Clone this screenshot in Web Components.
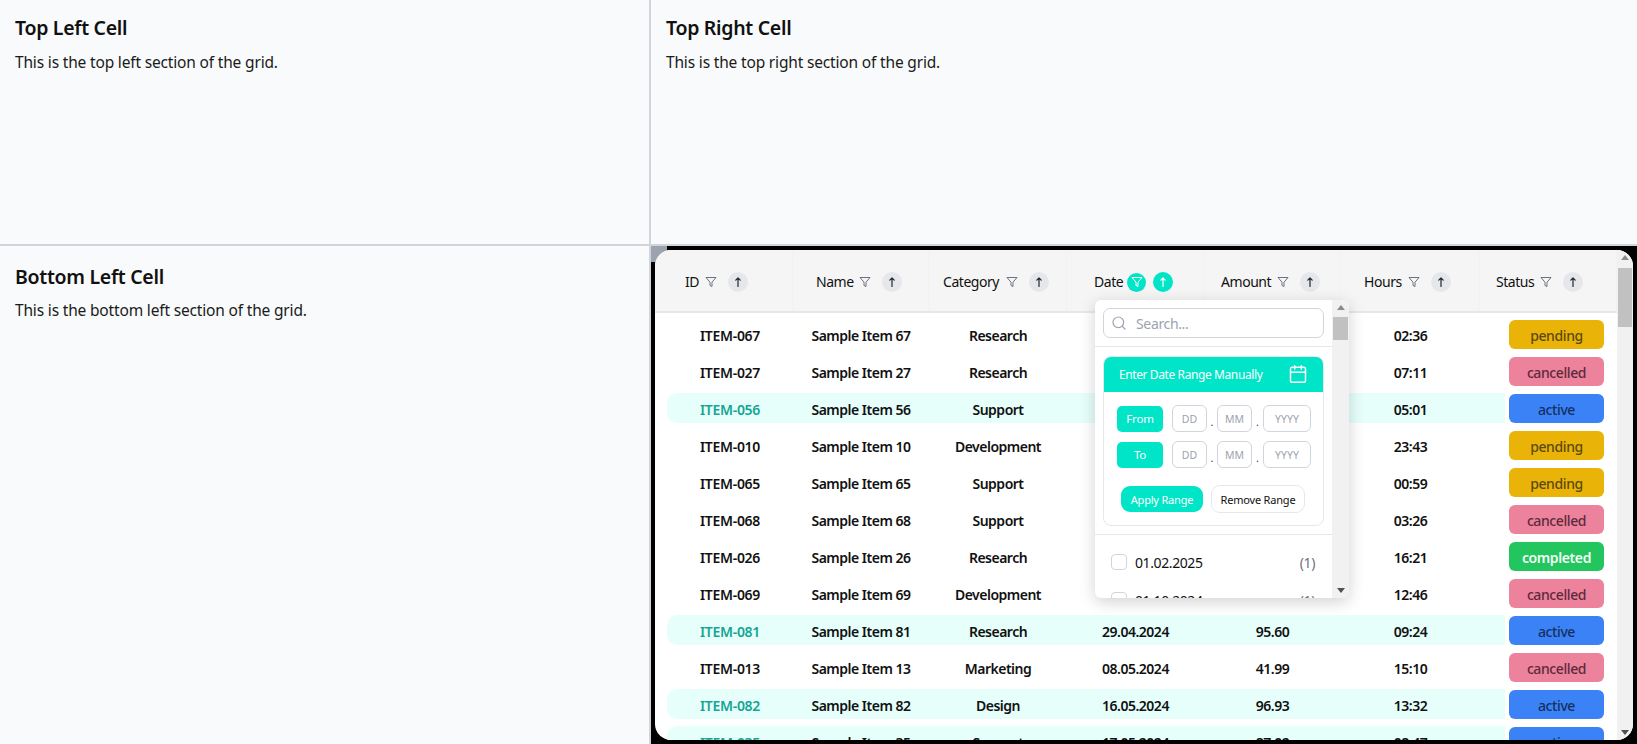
<!DOCTYPE html>
<html lang="en"><head><meta charset="utf-8"><title>Grid</title>
<style>
html,body{margin:0;height:744px;overflow:hidden;background:#f9fafb;font-family:"Noto Sans","Open Sans",sans-serif;color:#111}
</style></head><body>
<app-grid>
  <info-cell slot="tl" heading="Top Left Cell" text="This is the top left section of the grid."></info-cell>
  <info-cell slot="tr" heading="Top Right Cell" text="This is the top right section of the grid."></info-cell>
  <info-cell slot="bl" lower heading="Bottom Left Cell" text="This is the bottom left section of the grid."></info-cell>
  <table-frame slot="br"></table-frame>
</app-grid>
<script>
const svg=(w,h,vb,body,extra='')=>`<svg width="${w}" height="${h}" viewBox="${vb}" fill="none" ${extra}>${body}</svg>`;
const FILTER=c=>svg(12,12,'0 0 24 24',`<polygon points="22 3 2 3 10 12.46 10 19 14 21 14 12.46 22 3" stroke="${c}" stroke-width="2" stroke-linejoin="round"/>`);
const ARROW=c=>svg(12,12,'0 0 12 12',`<path d="M6 10.5V2M3.8 4.2L6 2l2.2 2.2" stroke="${c}" stroke-width="1.2" stroke-linecap="round" stroke-linejoin="round"/>`);

class AppGrid extends HTMLElement{constructor(){super();this.attachShadow({mode:'open'}).innerHTML=`<style>
:host{display:grid;grid-template-columns:649px 986px;grid-template-rows:244px 498px;gap:2px;background:#d1d5db;width:1637px;height:744px}
::slotted(*){min-width:0;min-height:0}
</style><slot name="tl"></slot><slot name="tr"></slot><slot name="bl"></slot><slot name="br"></slot>`}}
customElements.define('app-grid',AppGrid);

class InfoCell extends HTMLElement{connectedCallback(){if(this.shadowRoot)return;this.attachShadow({mode:'open'}).innerHTML=`<style>
:host{display:block;background:#f9fafb;padding:14px 15px;box-sizing:border-box}
:host([lower]){padding-top:17px}
:host([lower]) p{margin-top:9px}
h2{margin:0;font:600 19.5px/28px "Noto Sans",sans-serif;letter-spacing:-.3px;color:#111}
p{margin:10px 0 0;font:400 15.5px/20px "Noto Sans",sans-serif;letter-spacing:-.17px;color:#1a1a1a}
</style><h2>${this.getAttribute('heading')}</h2><p>${this.getAttribute('text')}</p>`}}
customElements.define('info-cell',InfoCell);

class FakeScrollbar extends HTMLElement{connectedCallback(){if(this.shadowRoot)return;const th=this.getAttribute('thumb-top'),h=this.getAttribute('thumb-height');
this.attachShadow({mode:'open'}).innerHTML=`<style>
:host{display:flex;flex-direction:column;width:var(--w,16px);flex:none;background:#f1f1f1;position:relative}
.up,.down{position:absolute;left:50%;margin-left:-4px;width:0;height:0;border:4px solid transparent}
.up{top:5px;border-top:0;border-bottom:5px solid #8a8a8a}
.down{bottom:5px;border-bottom:0;border-top:5px solid #505050}
.t{position:absolute;left:1px;right:1px;top:${th}px;height:${h}px;background:#c1c1c1}
</style><span class="up"></span><span class="t"></span><span class="down"></span>`}}
customElements.define('fake-scrollbar',FakeScrollbar);

class HeaderCell extends HTMLElement{connectedCallback(){if(this.shadowRoot)return;const on=this.hasAttribute('active');
this.attachShadow({mode:'open'}).innerHTML=`<style>
:host{display:flex;align-items:center;box-sizing:border-box;border-right:1px solid #f2f2f2;padding:3px 0 0 var(--pl);height:100%}
.l{width:var(--lw);white-space:nowrap;font-size:14px;letter-spacing:-.45px;color:#111;flex:none;line-height:20px}
.f{width:20px;height:20px;border-radius:50%;display:flex;align-items:center;justify-content:center;flex:none}
.s{width:20px;height:20px;border-radius:50%;display:flex;align-items:center;justify-content:center;margin-left:7px;background:#e5e7eb;flex:none}
:host([active]) .f{width:19px;height:19px;background:#00e5c8}
:host([active]) .s{background:#00e5c8}
</style><span class="l">${this.getAttribute('label')}</span><span class="f">${FILTER(on?'#fff':'#6b7280')}</span><span class="s">${ARROW(on?'#fff':'#1f2937')}</span>`}}
customElements.define('header-cell',HeaderCell);

class StatusBadge extends HTMLElement{connectedCallback(){if(this.shadowRoot)return;
this.attachShadow({mode:'open'}).innerHTML=`<style>
:host{display:flex;align-items:center;justify-content:center;box-sizing:border-box;padding-top:2px;width:95px;height:29px;border-radius:6px;font-size:14px;font-weight:500;letter-spacing:-.4px;flex:none}
:host([kind=pending]){background:#eab308;color:#5c4a10}
:host([kind=cancelled]){background:#ec829b;color:#5c2a3c}
:host([kind=active]){background:#3b82f6;color:#14305f}
:host([kind=completed]){background:#22c55e;color:#f0fdf4;font-weight:600}
</style><slot></slot>`}}
customElements.define('status-badge',StatusBadge);

class DataRow extends HTMLElement{connectedCallback(){if(this.shadowRoot)return;const d=this.dataset;const hi=d.status==='active';
this.attachShadow({mode:'open'}).innerHTML=`<style>
:host{display:flex;height:30px;align-items:center;margin-left:12px;font-size:14px;font-weight:600;letter-spacing:-.5px;color:#111;flex:none}
.c{display:grid;grid-template-columns:126px 136px 138px 137px 137px 139px 25px;align-items:center;height:30px;box-sizing:border-box;padding-top:2px;border-radius:10px 0 0 10px;width:838px;flex:none}
:host([hi]) .c{background:#e6fffb}
:host([hi]) .id{color:#14a594}
span{text-align:center;white-space:nowrap}
.id{letter-spacing:-.3px}
status-badge{margin-left:4px;margin-top:1px}
</style><div class="c"><span class="id">${d.id}</span><span>${d.name}</span><span>${d.cat}</span><span>${d.date||''}</span><span>${d.amount||''}</span><span>${d.hours}</span><i></i></div><status-badge kind="${d.status}">${d.status}</status-badge>`;
if(hi)this.setAttribute('hi','')}}
customElements.define('data-row',DataRow);

class DateFilter extends HTMLElement{connectedCallback(){if(this.shadowRoot)return;
const dmy=()=>`<span class="in" style="width:35px">DD</span><b>.</b><span class="in" style="width:35px">MM</span><b style="width:11px">.</b><span class="in" style="width:48px">YYYY</span>`;
this.attachShadow({mode:'open'}).innerHTML=`<style>
:host{position:absolute;left:440px;top:50px;width:254px;height:298px;display:flex;background:#fff;border-radius:6px;overflow:hidden;font-size:14px}
.wrap{flex:1;min-width:0;display:flex;flex-direction:column}
.top{height:47px;box-sizing:border-box;border-bottom:1px solid #e5e7eb;padding:8px 8px 0;flex:none}
.search{height:30px;box-sizing:border-box;border:1px solid #d1d5db;border-radius:7px;display:flex;align-items:center;padding-left:7px;gap:9px;color:#9ca3af;letter-spacing:-.35px}
.mid{height:188px;box-sizing:border-box;border-bottom:1px solid #e5e7eb;padding:9px 8px 0 8px;flex:none}
.card{height:170px;box-sizing:border-box;border:1px solid #e5e7eb;border-radius:8px;overflow:hidden}
.hd{height:36px;background:#00e5c8;color:#fff;display:flex;align-items:center;justify-content:space-between;padding:0 16px 0 16px;font-size:12px;letter-spacing:-.4px;margin:-1px -1px 0}
.rw{display:flex;align-items:center;margin:13px 0 0 13px}
.rw+.rw{margin-top:9px}
.tag{width:46px;height:26px;background:#00e5c8;color:#fff;border-radius:5px;font-size:11.5px;display:flex;align-items:center;justify-content:center;margin-right:9px;letter-spacing:-.2px}
.in{height:27px;box-sizing:border-box;border:1px solid #d1d5db;border-radius:6px;color:#9ca3af;font-size:10.5px;display:flex;align-items:center;justify-content:center}
b{font-weight:400;width:10px;text-align:center;font-size:11px;color:#444;align-self:flex-end;line-height:20px}
.acts{display:flex;align-items:center;gap:8px;margin:17px 0 0 17px}
.ap,.rm{display:flex;align-items:center;justify-content:center;font-size:11px;letter-spacing:-.2px;border-radius:9px;box-sizing:border-box}
.ap{width:82px;height:26px;background:#00e5c8;color:#fff}
.rm{width:94px;height:28px;border:1px solid #e5e7eb;color:#111}
.li{height:22px;display:flex;align-items:center;padding:0 17px 0 16px;flex:none;letter-spacing:-.4px}
.li+.li{margin-top:16px}
.list{padding-top:16px}
.cb{width:16px;height:16px;box-sizing:border-box;border:1px solid #d1d5db;border-radius:4px;margin-right:8px;flex:none}
.n{margin-left:auto;color:#6b7280}
fake-scrollbar{--w:17px}
</style><div class="wrap">
<div class="top"><div class="search">${svg(16,16,'0 0 24 24','<circle cx="11" cy="11" r="8" stroke="#9ca3af" stroke-width="1.8"/><path d="M21 21l-4.3-4.3" stroke="#9ca3af" stroke-width="1.8" stroke-linecap="round"/>')}<span>Search...</span></div></div>
<div class="mid"><div class="card">
<div class="hd"><span>Enter Date Range Manually</span>${svg(20,20,'0 0 24 24','<rect x="3" y="4" width="18" height="18" rx="2" stroke="#fff" stroke-width="1.8"/><path d="M16 2v4M8 2v4M3 10h18" stroke="#fff" stroke-width="1.8" stroke-linecap="round"/>')}</div>
<div class="rw"><span class="tag">From</span>${dmy()}</div>
<div class="rw"><span class="tag">To</span>${dmy()}</div>
<div class="acts"><span class="ap">Apply Range</span><span class="rm">Remove Range</span></div>
</div></div>
<div class="list"><div class="li"><span class="cb"></span><span>01.02.2025</span><span class="n">(1)</span></div>
<div class="li"><span class="cb"></span><span>01.10.2024</span><span class="n">(1)</span></div></div>
</div><fake-scrollbar thumb-top="17" thumb-height="23"></fake-scrollbar>`;
}}
customElements.define('date-filter',DateFilter);

const ROWS=[
['ITEM-067','Sample Item 67','Research','','','02:36','pending'],
['ITEM-027','Sample Item 27','Research','','','07:11','cancelled'],
['ITEM-056','Sample Item 56','Support','','','05:01','active'],
['ITEM-010','Sample Item 10','Development','','','23:43','pending'],
['ITEM-065','Sample Item 65','Support','','','00:59','pending'],
['ITEM-068','Sample Item 68','Support','','','03:26','cancelled'],
['ITEM-026','Sample Item 26','Research','','','16:21','completed'],
['ITEM-069','Sample Item 69','Development','','','12:46','cancelled'],
['ITEM-081','Sample Item 81','Research','29.04.2024','95.60','09:24','active'],
['ITEM-013','Sample Item 13','Marketing','08.05.2024','41.99','15:10','cancelled'],
['ITEM-082','Sample Item 82','Design','16.05.2024','96.93','13:32','active'],
['ITEM-035','Sample Item 35','Support','17.05.2024','87.02','08:47','active']];
const HEAD=[['ID',138,30,16],['Name',136,23,39],['Category',138,14,59],['Date',137,27,33],['Amount',137,17,52],['Hours',139,23,40],['Status',137,16,40]];

class TableFrame extends HTMLElement{connectedCallback(){if(this.shadowRoot)return;
const head=HEAD.map(([l,w,p,lw])=>`<header-cell label="${l}" ${l==='Date'?'active':''} style="--pl:${p}px;--lw:${lw}px"></header-cell>`).join('');
const rows=ROWS.map(r=>{const e=document.createElement('data-row');const d=e.dataset;[d.id,d.name,d.cat,d.date,d.amount,d.hours,d.status]=r;return e.outerHTML}).join('');
this.attachShadow({mode:'open'}).innerHTML=`<style>
:host{display:flex;background:#000;padding:4px;box-sizing:border-box;position:relative}
.corner{position:absolute;left:0;top:0;width:16px;height:16px;background:#9ca3af}
.panel{position:relative;flex:1;min-width:0;display:flex;background:#fff;border-radius:16px;overflow:hidden}
.main{flex:1;min-width:0;display:flex;flex-direction:column;overflow:hidden}
.head{height:63px;box-sizing:border-box;flex:none;background:#f5f5f5;border-bottom:2px solid #e8e8e8;display:grid;grid-template-columns:${HEAD.map(h=>h[1]+'px').join(' ')}}
.rows{display:flex;flex-direction:column;gap:7px;padding-top:6px}
date-filter{box-shadow:0 4px 16px rgba(0,0,0,.18)}
</style><span class="corner"></span><div class="panel"><div class="main"><div class="head">${head}</div><div class="rows">${rows}</div></div>
<fake-scrollbar thumb-top="18" thumb-height="59"></fake-scrollbar><date-filter></date-filter></div>`}}
customElements.define('table-frame',TableFrame);
</script>
</body></html>
